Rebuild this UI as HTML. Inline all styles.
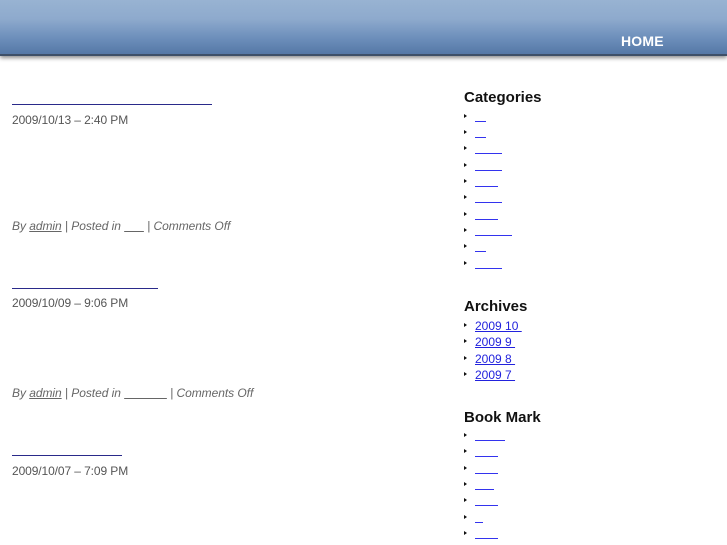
<!DOCTYPE html>
<html><head><meta charset="utf-8"><style>
body{margin:0;width:727px;height:545px;overflow:hidden;background:#fff;font-family:"Liberation Sans",sans-serif;position:relative}
.hdr{position:absolute;left:0;top:0;width:727px;height:54px;background:linear-gradient(#98b3d2 0%,#8eaacd 35%,#6d8fbb 70%,#5578a6 100%);border-bottom:2px solid #3e5068;box-shadow:0 2px 4px rgba(0,0,0,.45)}
.home{position:absolute;left:621px;top:33px;color:#fff;font-weight:bold;font-size:14px;letter-spacing:0.2px}
.t{position:absolute;height:0;border-bottom:1px solid #2a2a8a}
.d{position:absolute;left:12px;font-size:12px;color:#555;letter-spacing:-0.1px}
.m{position:absolute;left:12px;font-size:12px;color:#666;font-style:italic;letter-spacing:-0.05px}
.m u{color:#666}
h3{position:absolute;left:464px;margin:0;font-size:15px;font-weight:bold;color:#111}
.b{position:absolute;left:464px;width:0;height:0;border-left:3px solid #111;border-top:2.5px solid transparent;border-bottom:2.5px solid transparent}
.l{position:absolute;left:475px;height:0;border-bottom:1px solid #3333ee}
.ar{position:absolute;left:475px;font-size:12px;color:#2222dd;text-decoration:underline;white-space:pre}
</style></head><body>
<div class="hdr"><div class="home">HOME</div></div>

<div class="t" style="left:12px;top:104px;width:200px"></div>
<div class="d" style="top:113px">2009/10/13 – 2:40 PM</div>
<div class="m" style="top:219px">By <u>admin</u> | Posted in <u>&nbsp;&nbsp;&nbsp;&nbsp;&nbsp;&nbsp;</u> | Comments Off</div>

<div class="t" style="left:12px;top:288px;width:146px"></div>
<div class="d" style="top:296px">2009/10/09 – 9:06 PM</div>
<div class="m" style="top:386px">By <u>admin</u> | Posted in <u>&nbsp;&nbsp;&nbsp;&nbsp;&nbsp;&nbsp;&nbsp;&nbsp;&nbsp;&nbsp;&nbsp;&nbsp;&nbsp;</u> | Comments Off</div>

<div class="t" style="left:12px;top:455px;width:110px"></div>
<div class="d" style="top:464px">2009/10/07 – 7:09 PM</div>

<h3 style="top:89px">Categories</h3>
<div class="b" style="top:114px"></div><div class="l" style="top:121px;width:11px"></div>
<div class="b" style="top:130px"></div><div class="l" style="top:137px;width:11px"></div>
<div class="b" style="top:146px"></div><div class="l" style="top:153px;width:27px"></div>
<div class="b" style="top:163px"></div><div class="l" style="top:170px;width:27px"></div>
<div class="b" style="top:179px"></div><div class="l" style="top:186px;width:23px"></div>
<div class="b" style="top:195px"></div><div class="l" style="top:202px;width:27px"></div>
<div class="b" style="top:212px"></div><div class="l" style="top:219px;width:23px"></div>
<div class="b" style="top:228px"></div><div class="l" style="top:235px;width:37px"></div>
<div class="b" style="top:244px"></div><div class="l" style="top:251px;width:11px"></div>
<div class="b" style="top:261px"></div><div class="l" style="top:268px;width:27px"></div>

<h3 style="top:298px">Archives</h3>
<div class="b" style="top:323px"></div><div class="ar" style="top:319px">2009 10 </div>
<div class="b" style="top:339px"></div><div class="ar" style="top:335px">2009 9 </div>
<div class="b" style="top:356px"></div><div class="ar" style="top:352px">2009 8 </div>
<div class="b" style="top:372px"></div><div class="ar" style="top:368px">2009 7 </div>

<h3 style="top:409px">Book Mark</h3>
<div class="b" style="top:433px"></div><div class="l" style="top:440px;width:30px"></div>
<div class="b" style="top:449px"></div><div class="l" style="top:456px;width:23px"></div>
<div class="b" style="top:466px"></div><div class="l" style="top:473px;width:23px"></div>
<div class="b" style="top:482px"></div><div class="l" style="top:489px;width:19px"></div>
<div class="b" style="top:498px"></div><div class="l" style="top:505px;width:23px"></div>
<div class="b" style="top:515px"></div><div class="l" style="top:522px;width:8px"></div>
<div class="b" style="top:531px"></div><div class="l" style="top:538px;width:23px"></div>
</body></html>
